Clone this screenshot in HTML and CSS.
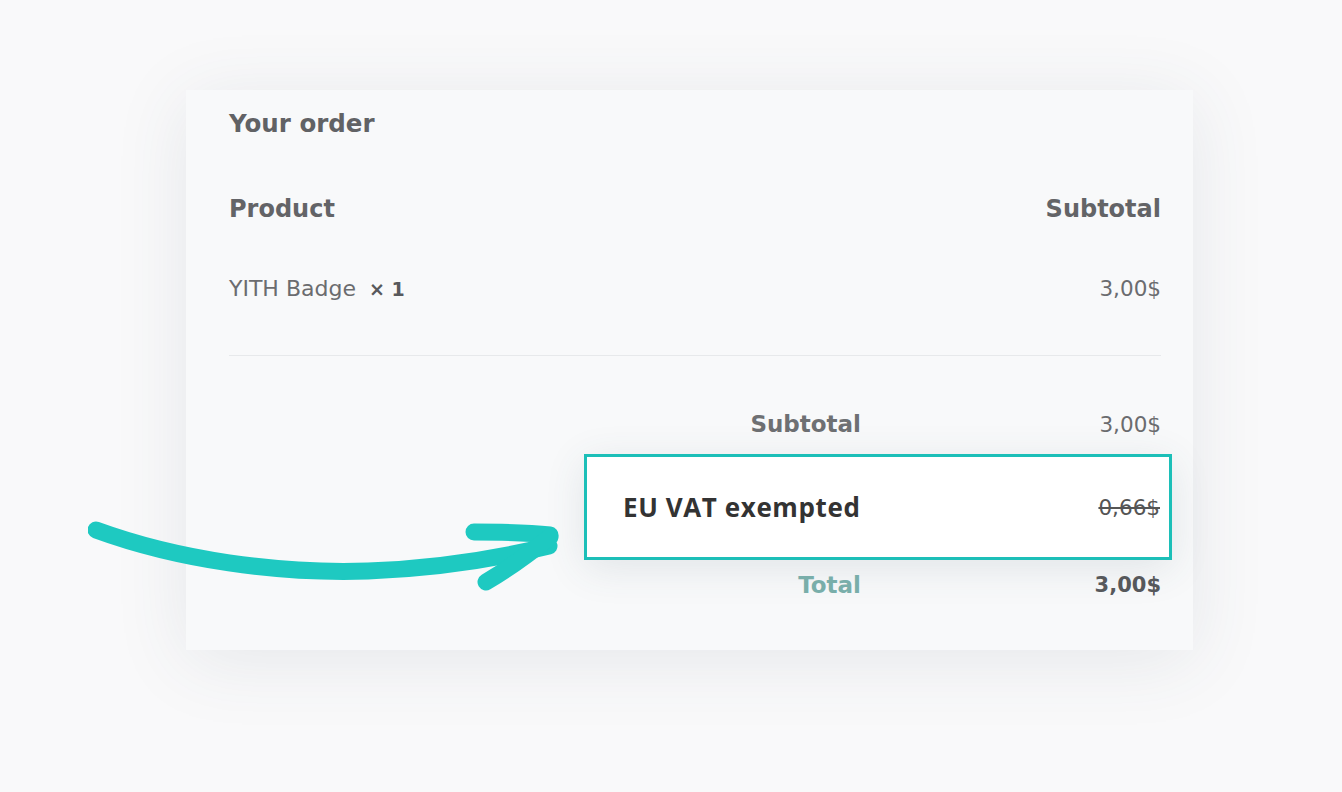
FILE: index.html
```html
<!DOCTYPE html>
<html>
<head>
<meta charset="utf-8">
<link rel="stylesheet" href="styles.css">
</head>
<body>
<div class="stage">
  <div class="card">
    <h3 class="heading">Your order</h3>
    <div class="row head-row">
      <span class="th">Product</span>
      <span class="th">Subtotal</span>
    </div>
    <div class="row item-row">
      <span class="item">YITH Badge <strong class="qty">× 1</strong></span>
      <span class="price">3,00$</span>
    </div>
    <div class="divider"></div>
    <div class="totals">
      <div class="trow">
        <span class="tlabel">Subtotal</span>
        <span class="price">3,00$</span>
      </div>
      <div class="vat-box">
        <span class="vat-label">EU VAT exempted</span>
        <span class="vat-price">0,66$</span>
      </div>
      <div class="trow">
        <span class="tlabel total-label">Total</span>
        <span class="price total-price">3,00$</span>
      </div>
    </div>
  </div>
  <svg class="arrow" width="480" height="90" viewBox="0 0 480 90">
    <path d="M8 20 C 90 50, 190 64, 280 61 C 360 58, 420 46, 461 36" fill="none" stroke="#1ec9c1" stroke-width="17" stroke-linecap="round"/>
    <path d="M386 22 C 420 22, 445 23, 462 25" fill="none" stroke="#1ec9c1" stroke-width="17" stroke-linecap="round"/>
    <path d="M462 27 C 442 43, 420 59, 398 72" fill="none" stroke="#1ec9c1" stroke-width="17" stroke-linecap="round"/>
  </svg>
</div>
</body>
</html>
```
FILE: styles.css
```css
* { box-sizing: border-box; }
html, body {
  margin: 0;
  padding: 0;
}
body {
  width: 1342px;
  height: 792px;
  overflow: hidden;
  background: #f9f9fa;
  font-family: "DejaVu Sans", "Inter", sans-serif;
}
.stage {
  position: relative;
  width: 1342px;
  height: 792px;
  padding-top: 90px;
  padding-left: 186px;
}
.card {
  width: 1007px;
  height: 560px;
  background: #f8f9fa;
  box-shadow: 0 10px 70px rgba(60, 80, 100, 0.10);
  padding: 0 32px 0 43px;
  display: flex;
  flex-direction: column;
}
.heading {
  margin: 0;
  height: 66px;
  display: flex;
  align-items: center;
  font-size: 24.5px;
  font-weight: 700;
  color: #616265;
}
.row {
  display: flex;
  justify-content: space-between;
  align-items: center;
  height: 46px;
}
.head-row { margin-top: 30px; }
.item-row { margin-top: 33px; }
.th {
  font-size: 24px;
  font-weight: 700;
  color: #636467;
}
.item {
  font-size: 22px;
  color: #6b6c6f;
}
.qty {
  font-weight: 700;
  color: #58595c;
  margin-left: 6px;
  font-size: 19px;
}
.price {
  font-size: 21.5px;
  color: #6b6c6f;
}
.divider {
  margin-top: 44px;
  height: 1px;
  background: #e7e9eb;
}
.totals {
  align-self: flex-end;
  width: 588px;
  margin-right: -11px;
  margin-top: 45px;
  display: flex;
  flex-direction: column;
}
.trow {
  display: grid;
  grid-template-columns: 1fr 300px;
  align-items: center;
  height: 46px;
  padding-right: 11px;
}
.trow .price { text-align: right; }
.tlabel {
  text-align: right;
  font-size: 23px;
  font-weight: 700;
  color: #6e7073;
}
.total-label { color: #79aeaa; }
.total-price { font-weight: 700; color: #56585b; font-size: 21px; }
.trow:last-child { margin-top: 2px; }
.vat-box {
  margin-top: 7px;
  height: 106px;
  border: 3px solid #1cbfb8;
  background: #ffffff;
  box-shadow: 0 8px 40px rgba(60, 80, 100, 0.12);
  display: flex;
  align-items: center;
  justify-content: space-between;
  padding: 0 9px 0 36px;
}
.vat-label {
  font-family: "Open Sans", sans-serif;
  font-weight: 700;
  font-size: 26px;
  letter-spacing: 0.6px;
  color: #333333;
}
.vat-price {
  font-size: 21.5px;
  color: #555;
  text-decoration: line-through;
}
.arrow {
  position: absolute;
  left: 88px;
  top: 510px;
}
```
